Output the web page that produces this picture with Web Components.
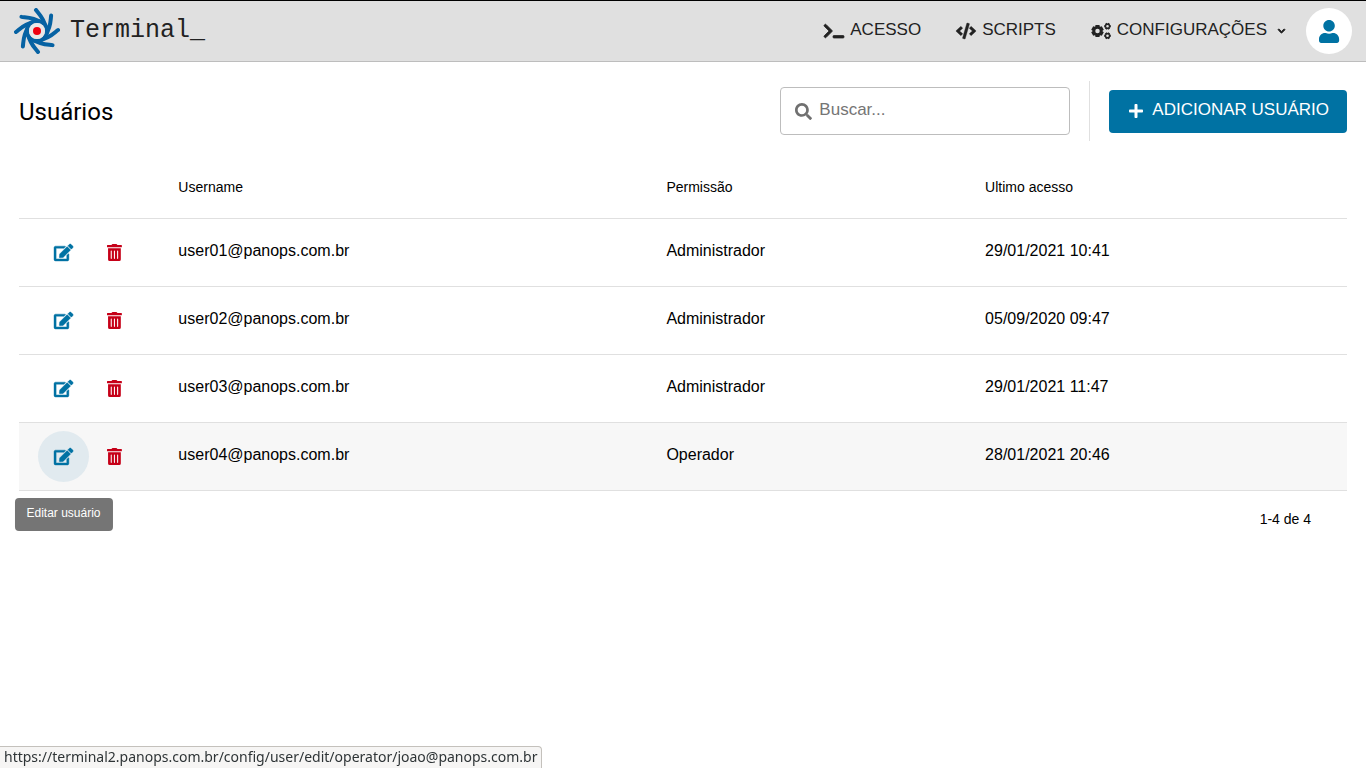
<!DOCTYPE html>
<html lang="pt-BR">
<head>
<meta charset="utf-8">
<meta name="viewport" content="width=device-width, initial-scale=1">
<title>Terminal - Usuários</title>
<style>
  html, body { margin: 0; padding: 0; background: #fff; }
  body { font-family: "Liberation Sans", Arial, sans-serif; color: #000; }
</style>
</head>
<body>
<terminal-app></terminal-app>

<script>
const gear = (cx, cy, outer, inner, hole, teeth, turn) => {
  const pts = [];
  for (let i = 0; i < teeth; i++) {
    const a = (i * 360 / teeth) + turn, w = 180 / teeth;
    [[-w * .6, outer], [w * .6, outer], [w * .9, inner], [w * 1.1, inner]].forEach(([d, r]) => {
      const t = (a + d) * Math.PI / 180;
      pts.push((cx + r * Math.cos(t)).toFixed(1) + ' ' + (cy + r * Math.sin(t)).toFixed(1));
    });
  }
  return `M${pts.join('L')}zM${cx - hole} ${cy}a${hole} ${hole} 0 1 0 ${hole * 2} 0a${hole} ${hole} 0 1 0 ${-hole * 2} 0z`;
};

const ICONS = {
  terminal: [640, 'M257.981 272.971L63.638 467.314c-9.373 9.373-24.569 9.373-33.941 0L7.029 444.647c-9.357-9.357-9.375-24.522-.04-33.901L161.011 256 6.99 101.255c-9.335-9.379-9.317-24.544.04-33.901l22.667-22.667c9.373-9.373 24.569-9.373 33.941 0L257.981 239.03c9.373 9.372 9.373 24.568 0 33.941zM640 456v-32c0-13.255-10.745-24-24-24H312c-13.255 0-24 10.745-24 24v32c0 13.255 10.745 24 24 24h304c13.255 0 24-10.745 24-24z', 24],
  code: [640, 'M278.9 511.5l-61-17.7c-6.4-1.8-10-8.5-8.2-14.9L346.2 8.7c1.8-6.4 8.5-10 14.9-8.2l61 17.7c6.4 1.8 10 8.5 8.2 14.9L293.8 503.3c-1.9 6.4-8.5 10.1-14.9 8.2zm-114-112.2l43.5-46.4c4.6-4.9 4.3-12.7-.8-17.2L117 256l90.6-79.7c5.1-4.5 5.5-12.3.8-17.2l-43.5-46.4c-4.5-4.8-12.1-5.1-17-.5L3.8 247.2c-5.1 4.7-5.1 12.8 0 17.5l144.1 135.1c4.9 4.6 12.5 4.4 17-.5zm327.2.6l144.1-135.1c5.1-4.7 5.1-12.8 0-17.5L492.1 112.1c-4.8-4.5-12.4-4.3-17 .5L431.6 159c-4.6 4.9-4.3 12.7.8 17.2L523 256l-90.6 79.7c-5.1 4.5-5.5 12.3-.8 17.2l43.5 46.4c4.5 4.9 12.1 5.1 17 .6z', 12],
  cogs: [640, gear(208, 256, 206, 160, 72, 6, 30) + gear(528, 104, 112, 86, 42, 6, 0) + gear(528, 408, 112, 86, 42, 6, 0)],
  user: [448, 'M224 256c70.7 0 128-57.3 128-128S294.7 0 224 0 96 57.3 96 128s57.3 128 128 128zm89.6 32h-16.7c-22.2 10.2-46.9 16-72.9 16s-50.6-5.8-72.9-16h-16.7C60.2 288 0 348.2 0 422.4V464c0 26.5 21.5 48 48 48h352c26.5 0 48-21.5 48-48v-41.600c0-74.200-60.200-134.400-134.400-134.400z'],
  plus: [448, 'M416 208H272V64c0-17.670-14.330-32-32-32h-32c-17.670 0-32 14.330-32 32v144H32c-17.670 0-32 14.330-32 32v32c0 17.670 14.330 32 32 32h144v144c0 17.670 14.330 32 32 32h32c17.670 0 32-14.330 32-32V304h144c17.670 0 32-14.330 32-32v-32c0-17.670-14.330-32-32-32z'],
  search: [512, 'M505 442.7L405.3 343c-4.500-4.500-10.600-7-17-7H372c27.600-35.300 44-79.700 44-128C416 93.100 322.900 0 208 0S0 93.100 0 208s93.100 208 208 208c48.300 0 92.700-16.400 128-44v16.300c0 6.400 2.500 12.500 7 17l99.700 99.700c9.400 9.400 24.600 9.400 33.900 0l28.300-28.300c9.400-9.400 9.400-24.600.1-34zM208 336c-70.700 0-128-57.200-128-128 0-70.700 57.200-128 128-128 70.700 0 128 57.200 128 128 0 70.700-57.200 128-128 128z'],
  edit: [576, 'M402.6 83.2l90.2 90.2c3.8 3.8 3.8 10 0 13.8L274.4 405.6l-92.8 10.3c-12.4 1.4-22.9-9.1-21.5-21.5l10.3-92.8L388.8 83.2c3.8-3.8 10-3.8 13.8 0zm162-22.9l-48.8-48.8c-15.2-15.2-39.9-15.2-55.2 0l-35.4 35.4c-3.8 3.8-3.8 10 0 13.8l90.2 90.2c3.8 3.8 10 3.8 13.8 0l35.4-35.4c15.2-15.3 15.2-40 0-55.2zM384 346.2V448H64V128h229.8c3.2 0 6.2-1.3 8.5-3.5l40-40c7.6-7.6 2.2-20.5-8.5-20.5H48C21.5 64 0 85.5 0 112v352c0 26.5 21.5 48 48 48h352c26.5 0 48-21.5 48-48V306.2c0-10.7-12.9-16-20.5-8.5l-40 40c-2.2 2.300-3.500 5.300-3.500 8.500z', 12],
  trash: [448, 'M32 464a48 48 0 0 0 48 48h288a48 48 0 0 0 48-48V128H32zm272-256a16 16 0 0 1 32 0v224a16 16 0 0 1-32 0zm-96 0a16 16 0 0 1 32 0v224a16 16 0 0 1-32 0zm-96 0a16 16 0 0 1 32 0v224a16 16 0 0 1-32 0zM432 32H312l-9.400-18.700A24 24 0 0 0 281.100 0H166.800a23.720 23.720 0 0 0-21.400 13.300L136 32H16A16 16 0 0 0 0 48v32a16 16 0 0 0 16 16h416a16 16 0 0 0 16-16V48a16 16 0 0 0-16-16z'],
  down: [448, 'M207 381.500L12.700 187.100c-9.400-9.400-9.400-24.600 0-33.900l22.700-22.700c9.400-9.400 24.500-9.400 33.900 0L224 284.500l154.700-154c9.400-9.300 24.500-9.300 33.900 0l22.700 22.700c9.400 9.400 9.400 24.600 0 33.900L241 381.500c-9.400 9.300-24.600 9.300-34 0z', 60]
};

class BaseElement extends HTMLElement {
  connectedCallback() {
    if (!this.shadowRoot) this.attachShadow({ mode: 'open' }).innerHTML = this.render();
  }
}

/* Icon whose height comes from --icon-size */
customElements.define('app-icon', class extends BaseElement {
  render() {
    const [w, d, weight = 0] = ICONS[this.getAttribute('name')];
    return `<style>
      :host { display: inline-flex; flex: none; }
      svg { display: block; height: var(--icon-size, 16px); fill: currentColor; overflow: visible; }
    </style>
    <svg viewBox="0 0 ${w} 512" aria-hidden="true"><path fill-rule="evenodd" stroke="currentColor" stroke-width="${weight}" d="${d}"/></svg>`;
  }
});

customElements.define('brand-logo', class extends BaseElement {
  render() {
    const arms = [0, 45, 90, 135, 180, 225, 270, 315]
      .map(a => `<path transform="rotate(${a} 23 23)" d="M22 2C25 6 30 10 32 20"/>`).join('');
    return `<style>
      :host { display: block; }
      a { display: flex; align-items: center; gap: 10px; color: #222; text-decoration: none; }
      svg { display: block; width: 46px; height: 46px; }
      span { font: 25px/30px "Liberation Mono", monospace; }
    </style>
    <a href="#">
      <svg viewBox="0 0 46 46" aria-hidden="true">
        <g fill="none" stroke="#0662a3" stroke-width="4" stroke-linecap="round">${arms}</g>
        <circle cx="23" cy="23" r="10" fill="#e0e0e0" stroke="#0662a3" stroke-width="4"/>
        <circle cx="23" cy="23" r="8" fill="#e8e8e8"/>
        <circle cx="23" cy="23" r="4" fill="#f0000f"/>
      </svg>
      <span>Terminal_</span>
    </a>`;
  }
});

customElements.define('nav-item', class extends BaseElement {
  render() {
    return `<style>
      :host { display: block; }
      a { display: flex; align-items: center; gap: 6px; color: #222; text-decoration: none; font-size: 17px; line-height: 20px; }
      .text { padding-bottom: 2px; }
      .caret { --icon-size: 8px; margin-left: 5px; }
    </style>
    <a href="#"><app-icon name="${this.getAttribute('icon')}"></app-icon><span class="text"><slot></slot></span>${
      this.hasAttribute('menu') ? '<app-icon class="caret" name="down"></app-icon>' : ''}</a>`;
  }
});

customElements.define('app-header', class extends BaseElement {
  render() {
    return `<style>
      :host { display: block; }
      header { display: flex; align-items: center; justify-content: space-between; box-sizing: border-box;
        height: 62px; padding: 0 14px; background: #e0e0e0; border-top: 1px solid #000; border-bottom: 1px solid #bdbdbd; }
      nav { display: flex; align-items: center; gap: 35px; }
      .right { display: flex; align-items: center; gap: 21px; }
      button { display: flex; align-items: center; justify-content: center; width: 46px; height: 46px; padding: 0;
        border: 0; border-radius: 50%; background: #fff; color: #0072a3; --icon-size: 23px; }
    </style>
    <header>
      <brand-logo></brand-logo>
      <div class="right">
        <nav>
          <nav-item icon="terminal">ACESSO</nav-item>
          <nav-item icon="code">SCRIPTS</nav-item>
          <nav-item icon="cogs" menu>CONFIGURAÇÕES</nav-item>
        </nav>
        <button type="button" aria-label="Perfil"><app-icon name="user"></app-icon></button>
      </div>
    </header>`;
  }
});

customElements.define('search-field', class extends BaseElement {
  render() {
    return `<style>
      :host { display: block; }
      label { display: flex; align-items: center; gap: 7px; box-sizing: border-box; width: 290px; height: 48px;
        padding: 0 14px; border: 1px solid #bdbdbd; border-radius: 4px; color: #707070; --icon-size: 17px; }
      input { flex: 1; min-width: 0; border: 0; outline: 0; padding: 0 0 2px; background: none;
        font: 17px/20px "Liberation Sans", Arial, sans-serif; color: #000; }
      input::placeholder { color: #757575; opacity: 1; }
    </style>
    <label><app-icon name="search"></app-icon><input type="text" placeholder="Buscar..." aria-label="Buscar"></label>`;
  }
});

customElements.define('primary-button', class extends BaseElement {
  render() {
    return `<style>
      :host { display: block; }
      button { display: flex; align-items: center; gap: 9px; height: 43px; padding: 0 18px 0 20px; border: 0; border-radius: 4px;
        background: #0072a3; color: #fff; font: 17px/20px "Liberation Sans", Arial, sans-serif; }
      span { padding-bottom: 2px; }
    </style>
    <button type="button"><app-icon name="plus"></app-icon><span><slot></slot></span></button>`;
  }
});

customElements.define('page-toolbar', class extends BaseElement {
  render() {
    return `<style>
      :host { display: flex; align-items: center; justify-content: space-between; height: 60px; }
      h1 { margin: 0; padding-top: 2px; font: 400 24px/32px Roboto, sans-serif; }
      .tools { display: flex; align-items: center; gap: 19px; height: 100%; }
      .rule { width: 1px; height: 100%; background: #e0e0e0; }
    </style>
    <h1><slot></slot></h1>
    <div class="tools">
      <search-field></search-field>
      <div class="rule"></div>
      <primary-button>ADICIONAR USUÁRIO</primary-button>
    </div>`;
  }
});

customElements.define('row-action', class extends BaseElement {
  render() {
    const icon = this.getAttribute('icon'), label = this.getAttribute('label');
    const inner = `<app-icon name="${icon}"></app-icon>`;
    return `<style>
      :host { display: block; position: relative; --icon-size: 17px; }
      a, button { display: flex; align-items: center; justify-content: center; width: 51px; height: 51px; padding: 0;
        border: 0; border-radius: 50%; background: none; color: #0072a3; }
      button { color: #c60018; }
      :host([active]) a { background: #e1eaef; }
      .tip { position: absolute; top: 67px; left: 50%; transform: translateX(-50%); padding: 7px 12px 10px; border-radius: 4px;
        background: #757575; color: #fff; font-size: 12px; line-height: 16px; white-space: nowrap; }
    </style>
    ${icon === 'edit' ? `<a href="#" aria-label="${label}">${inner}</a>` : `<button type="button" aria-label="${label}">${inner}</button>`}
    ${this.hasAttribute('active') ? `<div class="tip" role="tooltip">${label}</div>` : ''}`;
  }
});

customElements.define('user-table', class extends BaseElement {
  render() {
    const users = [
      ['user01@panops.com.br', 'Administrador', '29/01/2021 10:41'],
      ['user02@panops.com.br', 'Administrador', '05/09/2020 09:47'],
      ['user03@panops.com.br', 'Administrador', '29/01/2021 11:47'],
      ['user04@panops.com.br', 'Operador', '28/01/2021 20:46']
    ];
    const rows = users.map((u, i) => {
      const on = i === 3;
      return `<tr${on ? ' class="hover"' : ''}>
        <td class="actions"><div>
          <row-action icon="edit" label="Editar usuário"${on ? ' active' : ''}></row-action>
          <row-action icon="trash" label="Remover usuário"></row-action>
        </div></td>${u.map(c => `<td>${c}</td>`).join('')}</tr>`;
    }).join('');
    return `<style>
      :host { display: block; }
      table { width: 100%; table-layout: fixed; border-collapse: separate; border-spacing: 0; }
      th, td { box-sizing: border-box; height: 68px; padding: 0 0 4px; text-align: left; vertical-align: middle;
        border-bottom: 1px solid #e0e0e0; font-size: 16px; line-height: 20px; font-weight: 400; }
      th { height: 62px; padding: 0 0 2px; font-size: 14px; }
      td.actions { padding: 0 0 0 19px; }
      td.actions div { display: flex; }
      .c1 { width: 12%; } .c2 { width: 36.75%; } .c3 { width: 24%; }
      .hover { background: #f7f7f7; }
      .pages { display: flex; justify-content: flex-end; align-items: center; height: 56px; padding-right: 36px; font-size: 14px; line-height: 20px; }
    </style>
    <table>
      <colgroup><col class="c1"><col class="c2"><col class="c3"><col></colgroup>
      <thead><tr><th></th><th>Username</th><th>Permissão</th><th>Ultimo acesso</th></tr></thead>
      <tbody>${rows}</tbody>
    </table>
    <div class="pages"><span>1-4 de 4</span></div>`;
  }
});

customElements.define('link-status', class extends BaseElement {
  render() {
    return `<style>
      :host { position: fixed; left: 0; bottom: 0; box-sizing: border-box; height: 22px; padding: 0 4px; background: #f6f5f4;
        border: solid #c4c1bc; border-width: 1px 1px 0 0; border-radius: 0 4px 0 0; color: #2e3436;
        font: 14px/20px "Noto Sans", sans-serif; white-space: nowrap; }
    </style><slot></slot>`;
  }
});

customElements.define('terminal-app', class extends BaseElement {
  render() {
    return `<style>
      :host { display: block; }
      main { padding: 19px 19px 0; }
      user-table { margin-top: 16px; }
    </style>
    <app-header></app-header>
    <main>
      <page-toolbar>Usuários</page-toolbar>
      <user-table></user-table>
    </main>
    <link-status>https://terminal2.panops.com.br/config/user/edit/operator/joao@panops.com.br</link-status>`;
  }
});
</script>
</body>
</html>
